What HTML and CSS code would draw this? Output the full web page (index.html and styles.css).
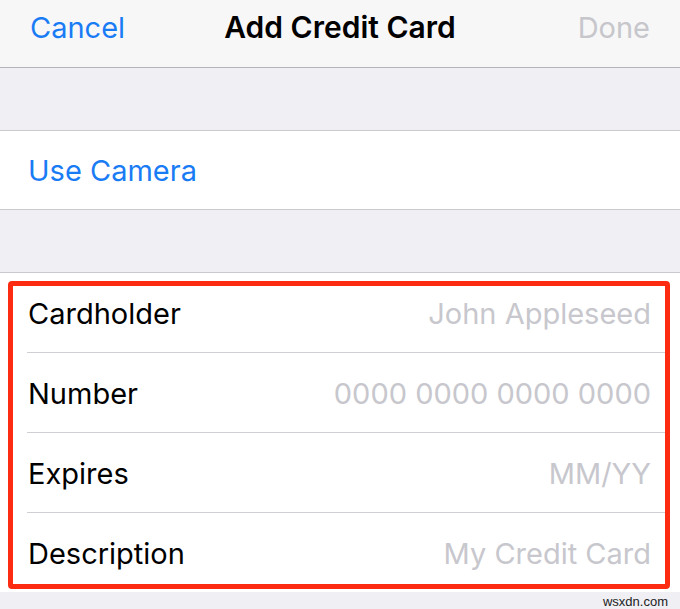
FILE: index.html
```html
<!DOCTYPE html>
<html>
<head>
<meta charset="utf-8">
<link rel="stylesheet" href="styles.css">
</head>
<body>
<header class="nav">
  <span class="nav-btn cancel">Cancel</span>
  <span class="nav-title">Add Credit Card</span>
  <span class="nav-btn done">Done</span>
</header>
<div class="spacer"></div>
<section class="group">
  <div class="row camera">Use Camera</div>
</section>
<div class="spacer"></div>
<section class="group form">
  <div class="row field"><span class="label">Cardholder</span><span class="ph">John Appleseed</span></div>
  <div class="row field"><span class="label">Number</span><span class="ph">0000 0000 0000 0000</span></div>
  <div class="row field"><span class="label">Expires</span><span class="ph">MM/YY</span></div>
  <div class="row field last"><span class="label">Description</span><span class="ph">My Credit Card</span></div>
  <div class="highlight"></div>
</section>
<footer class="footer"><span class="wm">wsxdn.com</span></footer>
</body>
</html>
```
FILE: styles.css
```css
html, body {
  margin: 0;
  padding: 0;
}
body {
  width: 680px;
  height: 609px;
  overflow: hidden;
  background: #efeff4;
  font-family: "Inter", "Liberation Sans", sans-serif;
  -webkit-font-smoothing: antialiased;
}
.nav {
  height: 67px;
  background: #f7f7f8;
  border-bottom: 1px solid #b4b4b8;
  display: flex;
  align-items: center;
  justify-content: space-between;
  padding: 0 30px;
  position: relative;
  box-sizing: content-box;
  font-size: 29px;
}
.nav-btn {
  padding-bottom: 12px;
}
.cancel { color: #1a7cf5; }
.done { color: #c6c6cb; }
.nav-title {
  position: absolute;
  left: 0;
  right: 0;
  text-align: center;
  top: 9px;
  font-size: 30px;
  font-weight: 600;
  color: #000;
}
.spacer {
  height: 62px;
}
.group {
  background: #fff;
  border-top: 1px solid #c9c9ce;
  border-bottom: 1px solid #c9c9ce;
}
.row {
  display: flex;
  align-items: center;
  padding-left: 28px;
  font-size: 29px;
}
.camera {
  height: 78px;
  color: #1a7cf5;
}
.form {
  position: relative;
  border-bottom: none;
}
.field {
  height: 79px;
  justify-content: space-between;
  padding-right: 29px;
  position: relative;
  color: #000;
}
.field::after {
  content: "";
  position: absolute;
  left: 27px;
  right: 15px;
  bottom: -1px;
  height: 1px;
  background: #d0d0d4;
}
.field + .field {
  margin-top: 1px;
}
.field.last::after {
  display: none;
}
.label {
  padding-top: 2px;
}
.ph {
  color: #c7c7cd;
  padding-top: 2px;
}
.highlight {
  position: absolute;
  left: 8px;
  top: 8px;
  width: 662px;
  height: 308px;
  box-sizing: border-box;
  border: 5px solid #fd2b12;
  border-radius: 4px;
}
.footer {
  height: 18px;
  display: flex;
  justify-content: flex-end;
  align-items: center;
  padding-right: 12px;
}
.wm {
  font-family: "Liberation Sans", sans-serif;
  font-size: 13px;
  color: #222;
}
```
